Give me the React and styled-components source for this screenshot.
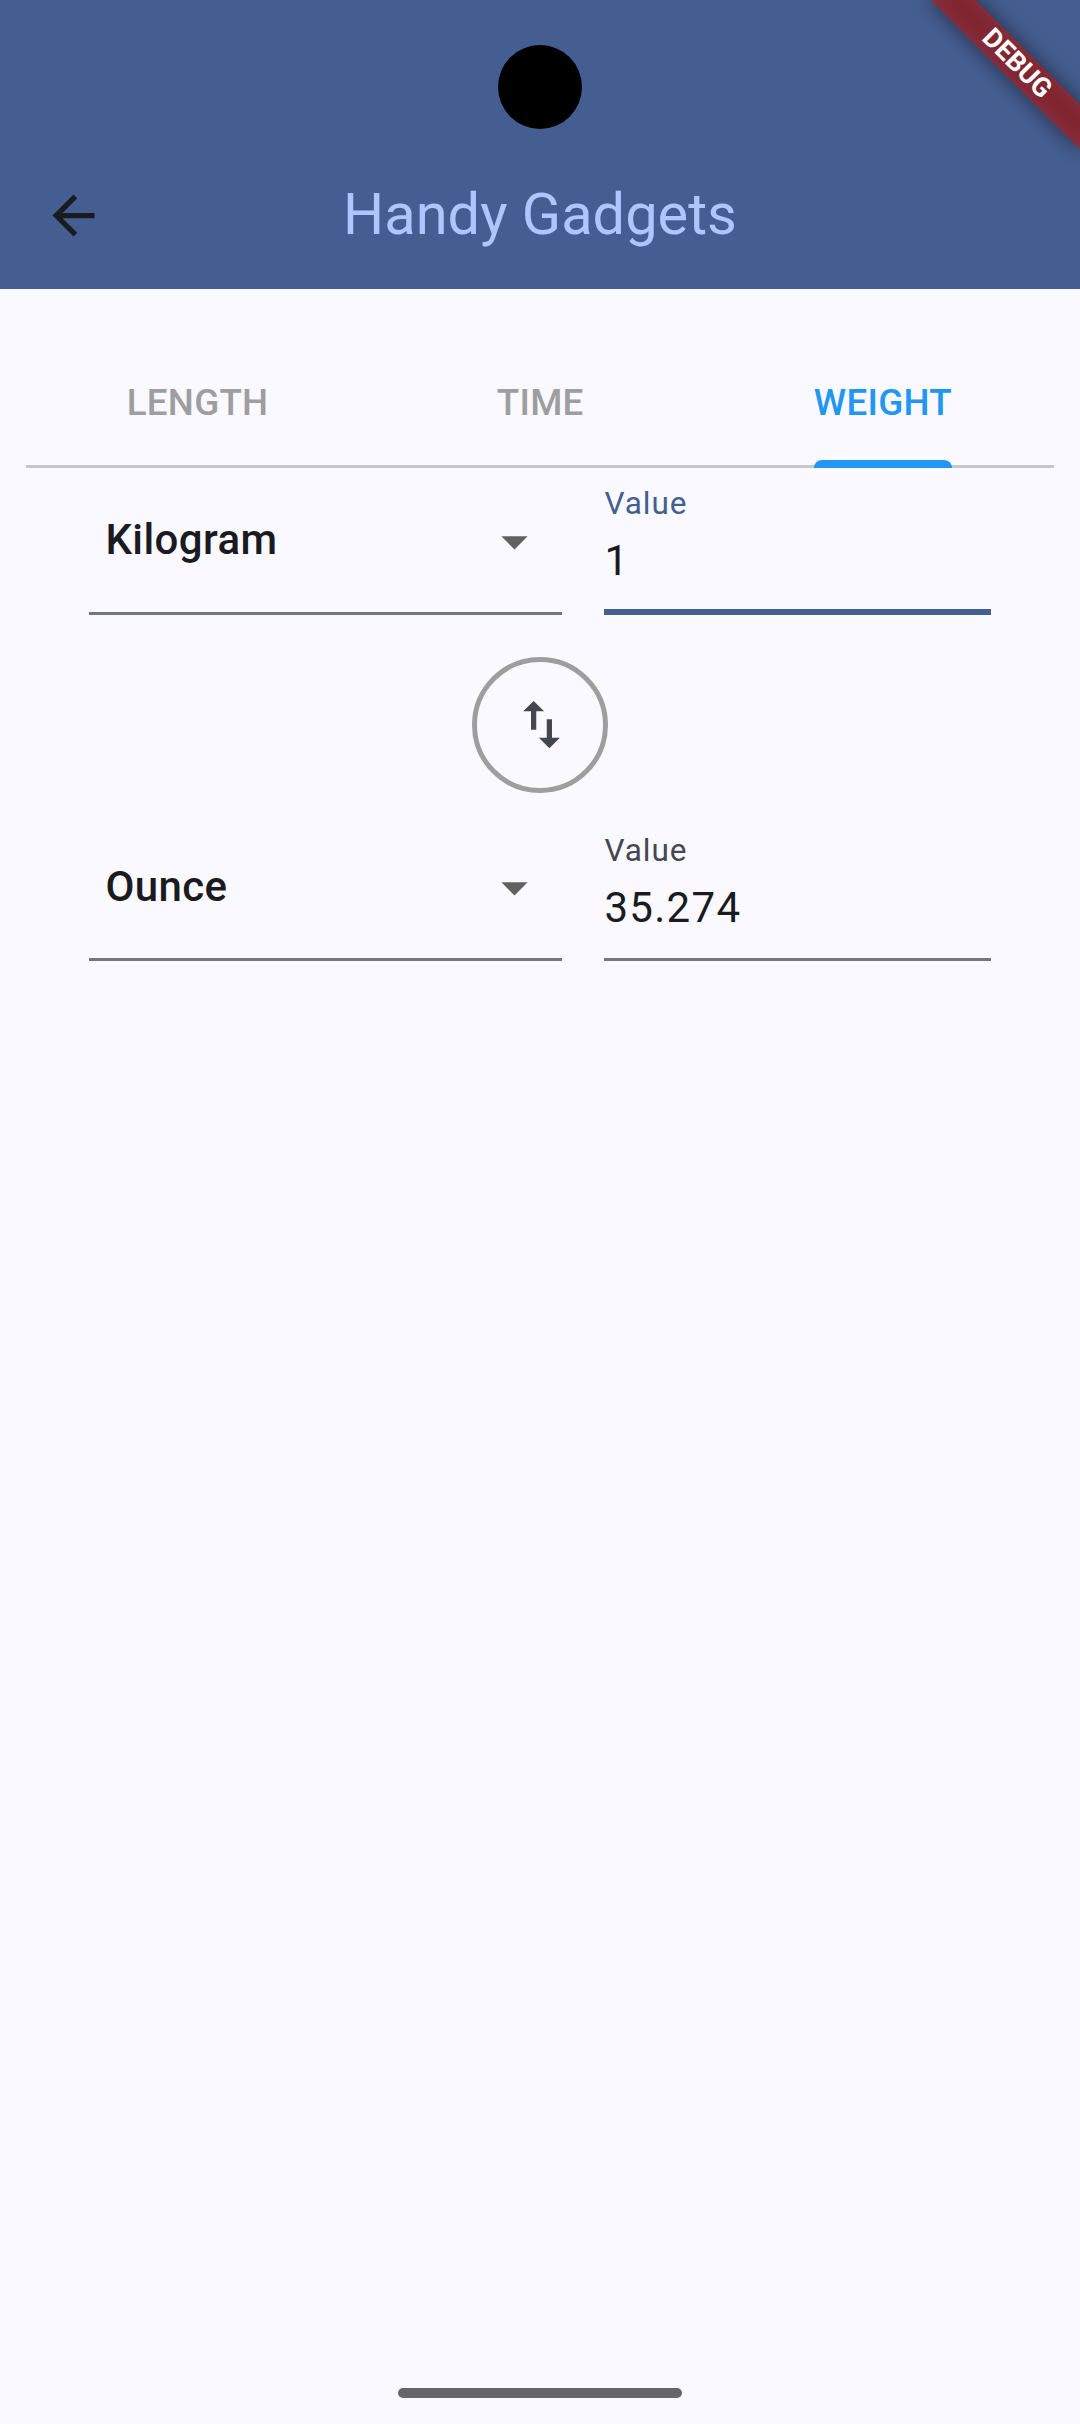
import React from "react";
import styled, { createGlobalStyle } from "styled-components";

const GlobalStyle = createGlobalStyle`
  * { box-sizing: border-box; }
  body { margin: 0; background: #faf9ff; }
`;

const Screen = styled.div`
  position: relative;
  display: flex;
  flex-direction: column;
  width: 1080px;
  height: 2424px;
  overflow: hidden;
  background: #faf9ff;
  color: #1a1b20;
  font-family: Roboto, "Liberation Sans", sans-serif;
`;

const Header = styled.header`
  display: flex;
  flex-direction: column;
  height: 289px;
  background: #445e91;
`;

const StatusBar = styled.div`
  display: flex;
  justify-content: center;
  height: 142px;
  padding-top: 44.6px;
  padding-right: 1px;
`;

const CameraCutout = styled.div`
  width: 84px;
  height: 84px;
  border-radius: 50%;
  background: #000;
`;

const Toolbar = styled.div`
  display: grid;
  grid-template-columns: 147px 1fr 147px;
  align-items: center;
  height: 147px;
`;

const BackButton = styled.button`
  display: flex;
  align-items: center;
  justify-content: center;
  height: 147px;
  padding: 0;
  border: 0;
  background: none;
  color: #1a1b20;
`;

const Title = styled.h1`
  margin: 0;
  padding-bottom: 3px;
  font-size: 57.75px;
  font-weight: 400;
  line-height: 68px;
  text-align: center;
  color: #adc6ff;
`;

const Ribbon = styled.div`
  position: absolute;
  left: 975px;
  top: 73.5px;
  width: 210px;
  height: 31.5px;
  transform: rotate(45deg);
  transform-origin: 105px -73.5px;
`;

const RibbonShadow = styled.div`
  position: absolute;
  inset: 0;
  background: rgba(0, 0, 0, 0.5);
  filter: blur(10.4px);
`;

const RibbonLabel = styled.div`
  position: absolute;
  inset: 0;
  background: rgba(183, 28, 28, 0.627);
  color: #fff;
  font-size: 26.775px;
  font-weight: 700;
  line-height: 30px;
  text-align: center;
`;

const Tabs = styled.nav`
  display: grid;
  grid-template-columns: repeat(3, 1fr);
  height: 126px;
  margin: 53px 26px 0;
  border-bottom: 3px solid #c4c6d0;
`;

const Tab = styled.div`
  display: flex;
  justify-content: center;
  padding-left: 0.5px;
  color: ${(p) => (p.$active ? "#2196f3" : "#9e9e9e")};
`;

const TabBody = styled.div`
  display: flex;
  flex-direction: column;
  justify-content: space-between;
  height: 126px;
`;

const TabText = styled.span`
  padding-top: 39px;
  font-size: 36.75px;
  font-weight: 500;
  line-height: 43px;
  letter-spacing: 0.26px;
`;

const Indicator = styled.span`
  height: 8px;
  border-radius: 8px 8px 0 0;
  background: ${(p) => (p.$active ? "#2196f3" : "transparent")};
`;

const Converter = styled.main`
  display: flex;
  flex-direction: column;
  align-items: center;
  flex: 1;
`;

const Row = styled.section`
  display: grid;
  grid-template-columns: 473px 387px;
  column-gap: 42px;
  width: 902px;
  height: 147px;
`;

const UnitSelect = styled.div`
  display: flex;
  align-items: flex-start;
  justify-content: space-between;
  padding: 0 16px 0 16.4px;
  border-bottom: 3px solid #74777f;
`;

const UnitName = styled.span`
  padding-top: ${(p) => (p.$focused ? 47 : 48)}px;
  font-size: 42px;
  font-weight: 500;
  line-height: 49px;
  letter-spacing: 0.39px;
`;

const Field = styled.label`
  display: flex;
  flex-direction: column;
  padding-left: 0.4px;
  padding-top: ${(p) => (p.$focused ? 17 : 18)}px;
  background: linear-gradient(currentColor, currentColor) bottom / 100% ${(p) => (p.$focused ? 6 : 3)}px no-repeat;
  color: ${(p) => (p.$focused ? "#445e91" : "#74777f")};
`;

const FieldLabel = styled.span`
  font-size: 31.5px;
  line-height: 37px;
  letter-spacing: 0.98px;
  color: ${(p) => (p.$focused ? "#445e91" : "#44474f")};
`;

const FieldValue = styled.span`
  padding-top: 14px;
  font-size: 42px;
  line-height: 49px;
  letter-spacing: 1.31px;
  color: #1a1b20;
`;

const SwapButton = styled.button`
  display: flex;
  align-items: center;
  justify-content: center;
  width: 136px;
  height: 136px;
  margin: 42px 0 21px;
  padding: 0 0 1px 2px;
  border: 5px solid #9e9e9e;
  border-radius: 50%;
  background: none;
  color: #44474f;
`;

const Footer = styled.footer`
  display: flex;
  justify-content: center;
  height: 36px;
`;

const HomeHandle = styled.div`
  width: 284px;
  height: 10px;
  border-radius: 5px;
  background: #666668;
`;

const Glyph = styled.svg`
  display: block;
  flex: none;
  width: 63px;
  height: 63px;
  fill: currentColor;
`;

const DropGlyph = styled(Glyph)`
  margin-top: 42.2px;
  color: #616161;
`;

const tabs = ["LENGTH", "TIME", "WEIGHT"];

function UnitRow({ unit, value, focused }) {
  return (
    <Row>
      <UnitSelect>
        <UnitName $focused={focused}>{unit}</UnitName>
        <DropGlyph viewBox="0 0 24 24">
          <path d="M7 10l5 5 5-5z" />
        </DropGlyph>
      </UnitSelect>
      <Field $focused={focused}>
        <FieldLabel $focused={focused}>Value</FieldLabel>
        <FieldValue>{value}</FieldValue>
      </Field>
    </Row>
  );
}

export default function App() {
  return (
    <Screen>
      <GlobalStyle />
      <Header>
        <StatusBar>
          <CameraCutout />
        </StatusBar>
        <Toolbar>
          <BackButton aria-label="Back">
            <Glyph viewBox="0 0 24 24">
              <path d="M20 11H7.83l5.59-5.59L12 4l-8 8 8 8 1.41-1.41L7.83 13H20v-2z" />
            </Glyph>
          </BackButton>
          <Title>Handy Gadgets</Title>
        </Toolbar>
      </Header>
      <Tabs>
        {tabs.map((name) => (
          <Tab key={name} $active={name === "WEIGHT"}>
            <TabBody>
              <TabText>{name}</TabText>
              <Indicator $active={name === "WEIGHT"} />
            </TabBody>
          </Tab>
        ))}
      </Tabs>
      <Converter>
        <UnitRow unit="Kilogram" value="1" focused />
        <SwapButton aria-label="Swap units">
          <Glyph viewBox="0 0 24 24">
            <path d="M16 17.01V10h-2v7.01h-3L15 21l4-3.99h-3zM9 3L5 6.99h3V14h2V6.99h3L9 3z" />
          </Glyph>
        </SwapButton>
        <UnitRow unit="Ounce" value="35.274" />
      </Converter>
      <Footer>
        <HomeHandle />
      </Footer>
      <Ribbon>
        <RibbonShadow />
        <RibbonLabel>DEBUG</RibbonLabel>
      </Ribbon>
    </Screen>
  );
}
